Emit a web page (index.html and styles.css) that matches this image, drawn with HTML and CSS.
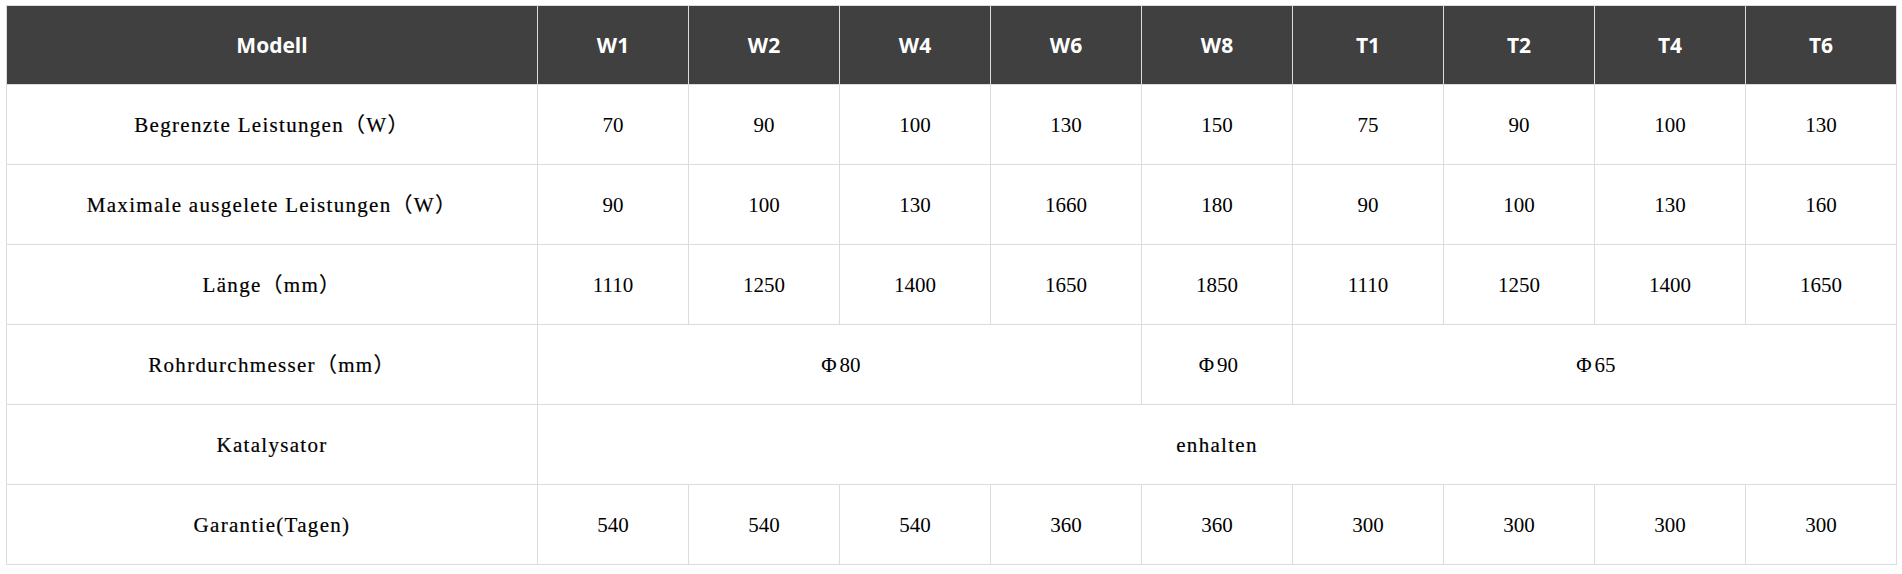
FILE: index.html
```html
<!DOCTYPE html>
<html lang="de">
<head>
<meta charset="utf-8">
<title>Modelle</title>
<link rel="stylesheet" href="styles.css">
</head>
<body>
<div class="wrap">
<table class="spec">
  <colgroup>
    <col class="c-label">
    <col class="c-val"><col class="c-val"><col class="c-val"><col class="c-val"><col class="c-val">
    <col class="c-val"><col class="c-val"><col class="c-val"><col class="c-val">
  </colgroup>
  <thead>
    <tr class="head">
      <th>Modell</th>
      <th>W1</th><th>W2</th><th>W4</th><th>W6</th><th>W8</th>
      <th>T1</th><th>T2</th><th>T4</th><th>T6</th>
    </tr>
  </thead>
  <tbody>
    <tr>
      <td class="label">Begrenzte Leistungen（W）</td>
      <td>70</td><td>90</td><td>100</td><td>130</td><td>150</td>
      <td>75</td><td>90</td><td>100</td><td>130</td>
    </tr>
    <tr>
      <td class="label">Maximale ausgelete Leistungen（W）</td>
      <td>90</td><td>100</td><td>130</td><td>1660</td><td>180</td>
      <td>90</td><td>100</td><td>130</td><td>160</td>
    </tr>
    <tr>
      <td class="label">Länge（mm）</td>
      <td>1110</td><td>1250</td><td>1400</td><td>1650</td><td>1850</td>
      <td>1110</td><td>1250</td><td>1400</td><td>1650</td>
    </tr>
    <tr>
      <td class="label">Rohrdurchmesser（mm）</td>
      <td colspan="4"><span class="phi">Φ</span>80</td>
      <td><span class="phi">Φ</span>90</td>
      <td colspan="4"><span class="phi">Φ</span>65</td>
    </tr>
    <tr>
      <td class="label">Katalysator</td>
      <td colspan="9" class="label">enhalten</td>
    </tr>
    <tr>
      <td class="label">Garantie(Tagen)</td>
      <td>540</td><td>540</td><td>540</td><td>360</td><td>360</td>
      <td>300</td><td>300</td><td>300</td><td>300</td>
    </tr>
  </tbody>
</table>
</div>
</body>
</html>
```
FILE: styles.css
```css
html, body {
  margin: 0;
  padding: 0;
  background: #ffffff;
}

.wrap {
  padding: 5px 0 0 6px;
}

.spec {
  border-collapse: collapse;
  table-layout: fixed;
  width: 1891px;
}

.c-label { width: 531px; }
.c-val { width: 151px; }

.spec th,
.spec td {
  border: 1px solid #dcdcdc;
  text-align: center;
  vertical-align: middle;
  padding: 0;
}

.head th {
  height: 78px;
  background: #404040;
  color: #ffffff;
  font-family: "Open Sans", "Liberation Sans", sans-serif;
  font-weight: 700;
  font-size: 21px;
}

.spec td {
  height: 79px;
  line-height: 24px;
  color: #000000;
  font-family: "Liberation Serif", "Noto Sans CJK SC", serif;
  font-size: 21px;
}

.spec td.label {
  letter-spacing: 1.3px;
  -webkit-text-stroke: 0.2px #000000;
}

.phi {
  display: inline-block;
  width: 21px;
  text-align: center;
}
```
